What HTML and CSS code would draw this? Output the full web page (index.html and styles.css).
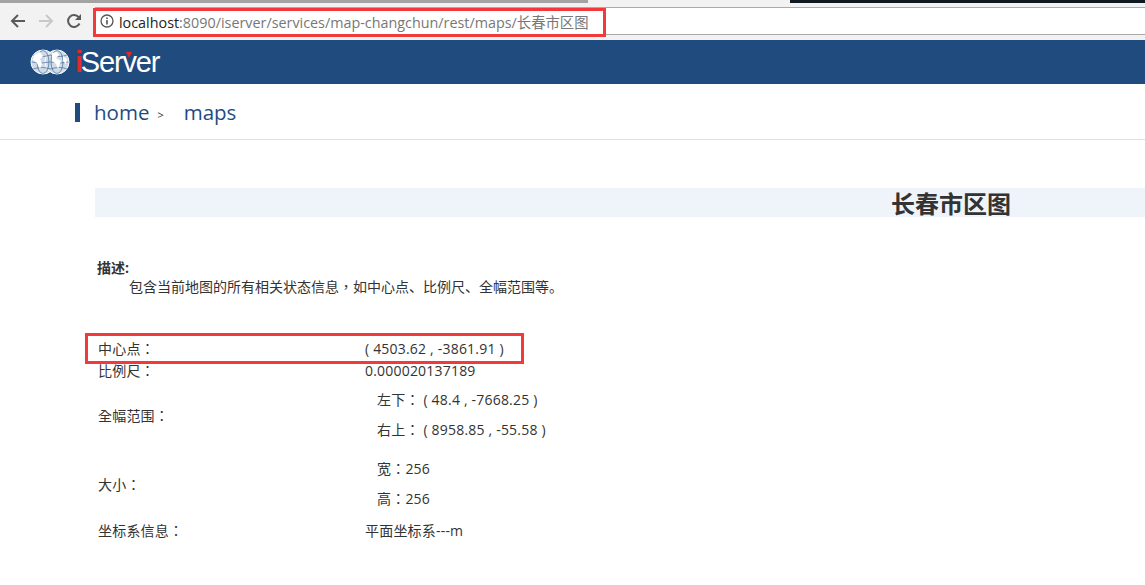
FILE: index.html
```html
<!DOCTYPE html>
<html lang="zh-CN">
<head>
    <meta charset="UTF-8">
    <title>长春市区图</title>
    <link rel="stylesheet" href="styles.css">
</head>
<body>
    <div class="tabstrip">
        <div class="tab"></div>
        <div class="window-edge"></div>
    </div>
    <div class="toolbar">
        <svg class="nav-icon" width="16" height="16" viewBox="0 0 16 16"><path d="M15 8H2M8 2L2 8l6 6" fill="none" stroke="#5a5a5a" stroke-width="2"/></svg>
        <svg class="nav-icon" width="16" height="16" viewBox="0 0 16 16"><path d="M1 8h13M8 2l6 6-6 6" fill="none" stroke="#c8c8c8" stroke-width="2"/></svg>
        <svg class="nav-icon" width="16" height="16" viewBox="0 0 16 16"><path d="M13.5 10.5A6 6 0 1 1 13 4.5" fill="none" stroke="#5a5a5a" stroke-width="2"/><path d="M15 1v6H9z" fill="#5a5a5a"/></svg>
        <div class="omnibox">
            <svg width="14" height="14" viewBox="0 0 14 14"><circle cx="7" cy="7" r="6" fill="none" stroke="#555" stroke-width="1.3"/><path d="M7 6v4.4M7 3.4v1.500" stroke="#555" stroke-width="1.6"/></svg>
            <span class="url"><b>localhost</b>:8090/iserver/services/map-changchun/rest/maps/长春市区图</span>
        </div>
    </div>

    <header class="site-header">
        <svg class="globes" width="40" height="26" viewBox="0 0 40 26">
            <g fill="#cfdbe8" stroke="#fff" stroke-width="1">
                <circle cx="13" cy="13" r="12"/>
                <circle cx="27" cy="13" r="12"/>
            </g>
            <g fill="none" stroke="#1f4b7f" stroke-width=".55">
                <ellipse cx="13" cy="13" rx="6" ry="11.5"/>
                <ellipse cx="27" cy="13" rx="6" ry="11.5"/>
                <path d="M3 6q10 3 17 0M20 6q10 3 17 0M1.500 13q11 2 18 0M20.500 13q11 2 18 0M3 20q10-3 17 0M20 20q10-3 17 0"/>
            </g>
            <path d="M4 6l6-3 3 4-3 3 2 5-2 5-3-6-4-3zM22 4l5-1 2 3-3 3 5 3-3 8-2-5-4-3zM33 7l4 3-1 5-3-3z" fill="#fff"/>
        </svg>
        <span class="logo"><span class="logo-i">i</span>Ser<span class="logo-v">v</span>er</span>
    </header>

    <nav class="breadcrumb">
        <a>home</a>
        <span class="sep">&gt;</span>
        <a>maps</a>
    </nav>

    <main class="content">
        <h1 class="title">长春市区图</h1>

        <div class="desc">
            <strong>描述:</strong>
            <p>包含当前地图的所有相关状态信息<span class="tc" lang="zh-TW">，</span>如中心点、比例尺、全幅范围等。</p>
        </div>

        <div class="info">
            <div class="row row-center">
                <span class="label tc" lang="zh-TW">中心点：</span>
                <span>( 4503.62 , -3861.91 )</span>
            </div>
            <div class="row row-scale">
                <span class="label tc" lang="zh-TW">比例尺：</span>
                <span>0.000020137189</span>
            </div>
            <div class="row row-bounds">
                <span class="label tc" lang="zh-TW">全幅范围：</span>
                <div class="sub tc" lang="zh-TW">
                    <div>左下： ( 48.4 , -7668.25 )</div>
                    <div>右上： ( 8958.85 , -55.58 )</div>
                </div>
            </div>
            <div class="row row-size">
                <span class="label tc" lang="zh-TW">大小：</span>
                <div class="sub tc" lang="zh-TW">
                    <div>宽：256</div>
                    <div>高：256</div>
                </div>
            </div>
            <div class="row row-crs">
                <span class="label tc" lang="zh-TW">坐标系信息：</span>
                <span>平面坐标系---m</span>
            </div>
        </div>
    </main>

    <!-- red annotation boxes drawn over the screenshot -->
    <div class="mark mark-url"></div>
    <div class="mark mark-center"></div>
</body>
</html>
```

FILE: styles.css
```css
html, body {
    margin: 0;
    height: 585px;
    overflow: hidden;
}
body {
    position: relative;
    background: #fff;
    font-family: "Open Sans", "Noto Sans CJK SC", sans-serif;
    color: #333;
}
/* TC font centres the full-width colon and comma, as the original does */
.tc {
    font-family: "Open Sans", "Noto Sans CJK TC", sans-serif;
}
.tabstrip {
    height: 3px;
    background: #f2f2f2;
    display: flex;
    justify-content: space-between;
}
.tab {
    width: 588px;
    background: #a3a3a3;
}
.window-edge {
    width: 355px;
    background: #10181f;
}
.toolbar {
    height: 37px;
    background: #f2f2f2;
    display: flex;
    align-items: center;
    padding: 4px 0 5px 10px;
    box-sizing: border-box;
    gap: 12px;
}
.omnibox {
    flex: 1;
    height: 28px;
    margin-left: 1px;
    padding-left: 5px;
    background: #fff;
    border-top: 1px solid #aaa;
    border-bottom: 1px solid #aaa;
    box-sizing: border-box;
    display: flex;
    align-items: center;
    gap: 5px;
}
.url {
    font-size: 14.35px;
    color: #777;
    white-space: nowrap;
}
.url b {
    font-weight: normal;
    color: #222;
}
.site-header {
    height: 44px;
    background: #1f4b7f;
    display: flex;
    align-items: center;
    padding-left: 30px;
    gap: 5px;
}
.logo {
    font-family: "Liberation Sans", sans-serif;
    font-size: 29px;
    letter-spacing: -1.2px;
    color: #fff;
}
.logo-i {
    color: #e02a2a;
    font-weight: bold;
    margin-right: -1px;
}
.logo-v {
    position: relative;
}
.logo-v::before {
    content: "";
    position: absolute;
    left: 4px;
    top: 6px;
    border-left: 3px solid transparent;
    border-right: 3px solid transparent;
    border-top: 6px solid #e02a2a;
}
.breadcrumb {
    height: 56px;
    border-bottom: 1px solid #e2e2e2;
    display: flex;
    align-items: center;
    padding: 1px 0 0 94px;
    box-sizing: border-box;
    font-size: 20.5px;
    color: #1f4b7f;
    position: relative;
}
.breadcrumb::before {
    content: "";
    position: absolute;
    left: 75px;
    top: 19px;
    width: 5px;
    height: 19px;
    background: #1f4b7f;
}
.sep {
    font-size: 11px;
    color: #333;
    margin: 5px 20px 0 8px;
}
.content {
    padding: 48px 0 0 95px;
}
.title {
    margin: 0;
    height: 29px;
    line-height: 31px;
    background: #eff3fa;
    font-size: 24px;
    font-weight: bold;
    padding-left: 796px;
    color: #333;
}
.desc {
    margin: 41px 0 0 2px;
    font-size: 14px;
    line-height: 19px;
}
.desc p {
    margin: 0;
    padding-left: 32px;
    line-height: 19px;
}
.info {
    margin: 41px 0 0 3px;
    font-size: 14px;
    letter-spacing: .2px;
}
.row {
    display: flex;
    align-items: center;
}
.label {
    width: 267px;
    flex: none;
}
.row-center, .row-scale {
    height: 22px;
}
.row-bounds {
    height: 60px;
    margin-top: 4px;
}
.row-size {
    height: 60px;
    margin-top: 9px;
}
.row-crs {
    height: 24px;
    margin-top: 4px;
}
.sub {
    padding-left: 12px;
}
.sub div {
    height: 30px;
    line-height: 30px;
}
.mark {
    position: absolute;
    box-sizing: border-box;
    border: 3px solid #f33a3a;
}
.mark-url {
    left: 93px;
    top: 8px;
    width: 513px;
    height: 29px;
}
.mark-center {
    left: 85px;
    top: 333px;
    width: 439px;
    height: 31px;
}
```
